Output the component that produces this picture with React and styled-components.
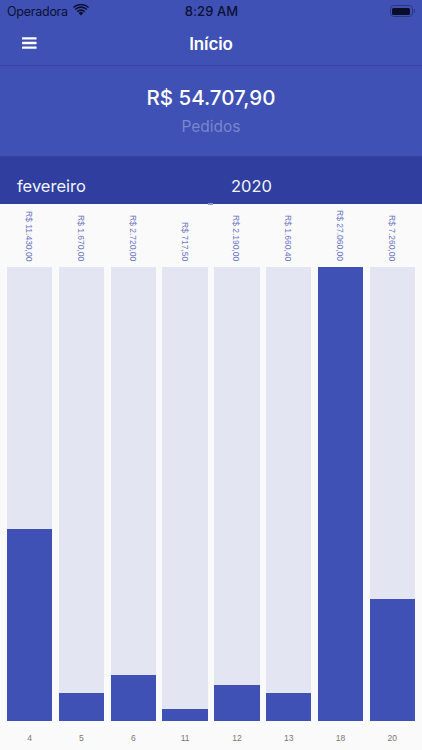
import React from "react";
import styled, { createGlobalStyle } from "styled-components";

const days = [
    { day: "4", value: "R$ 11.430,00", fill: 192 },
    { day: "5", value: "R$ 1.670,00", fill: 28 },
    { day: "6", value: "R$ 2.720,00", fill: 46 },
    { day: "11", value: "R$ 717,50", fill: 12 },
    { day: "12", value: "R$ 2.190,00", fill: 36.5 },
    { day: "13", value: "R$ 1.660,40", fill: 28 },
    { day: "18", value: "R$ 27.060,00", fill: 454 },
    { day: "20", value: "R$ 7.260,00", fill: 122 },
];

export default function App() {
    return (
        <>
            <GlobalStyle />
            <Screen>
                <Header>
                    <StatusBar>
                        <Carrier>
                            Operadora
                            <svg width="16" height="12" viewBox="0 0 16 12">
                                <path d="M8 11.6 5.6 9a3.4 3.4 0 0 1 4.8 0L8 11.6Z" fill="#0c1033" />
                                <path d="M3.7 7.1a6.1 6.1 0 0 1 8.6 0l-1.1 1.1a4.6 4.6 0 0 0-6.4 0L3.7 7.1Z" fill="#0c1033" />
                                <path d="M1.6 5a9.1 9.1 0 0 1 12.8 0l-1.1 1.1a7.6 7.6 0 0 0-10.6 0L1.6 5Z" fill="#0c1033" />
                                <path d="M0 3.1a11.4 11.4 0 0 1 16 0l-.9 1A10.1 10.1 0 0 0 .9 4.1L0 3.1Z" fill="#0c1033" />
                            </svg>
                        </Carrier>
                        <Clock>8:29 AM</Clock>
                        <BatterySlot>
                            <Battery>
                                <BatteryLevel />
                            </Battery>
                            <BatteryCap />
                        </BatterySlot>
                    </StatusBar>
                    <NavBar>
                        <MenuButton>
                            <svg width="15" height="12" viewBox="0 0 15 12">
                                <rect x="0" y="0.2" width="14.6" height="2.4" rx="0.6" fill="#fff" />
                                <rect x="0" y="4.8" width="14.6" height="2.4" rx="0.6" fill="#fff" />
                                <rect x="0" y="9.4" width="14.6" height="2.4" rx="0.6" fill="#fff" />
                            </svg>
                        </MenuButton>
                        <NavTitle>Início</NavTitle>
                    </NavBar>
                </Header>
                <Summary>
                    <Total>R$ 54.707,90</Total>
                    <TotalLabel>Pedidos</TotalLabel>
                </Summary>
                <Picker>
                    <PickerValue>fevereiro</PickerValue>
                    <PickerValue>2020</PickerValue>
                    <PickerMark />
                </Picker>
                <Chart>
                    {days.map((item) => (
                        <Column key={item.day}>
                            <ValueSlot>
                                <Value>{item.value}</Value>
                            </ValueSlot>
                            <Track>
                                <Fill style={{ height: item.fill }} />
                            </Track>
                            <DayLabel>{item.day}</DayLabel>
                        </Column>
                    ))}
                </Chart>
            </Screen>
        </>
    );
}

const GlobalStyle = createGlobalStyle`
    html, body {
        margin: 0;
        padding: 0;
        background: #fafafa;
    }
    * {
        box-sizing: border-box;
    }
`;
const Screen = styled.div`
    width: 422px;
    height: 750px;
    overflow: hidden;
    display: flex;
    flex-direction: column;
    background: #fafafa;
    font-family: Inter, "Liberation Sans", sans-serif;
`;
const Header = styled.header`
    height: 66px;
    background: #3f51b5;
    border-bottom: 1px solid #3747a3;
`;
const StatusBar = styled.div`
    height: 22px;
    padding: 0 7px;
    display: grid;
    grid-template-columns: 1fr auto 1fr;
    align-items: center;
    color: #0c1033;
`;
const Carrier = styled.div`
    display: flex;
    align-items: center;
    gap: 5px;
    font-size: 12.5px;
    letter-spacing: -0.25px;
    svg {
        margin-top: -2px;
    }
`;
const Clock = styled.div`
    margin-left: 1px;
    font-size: 13px;
    font-weight: 500;
    letter-spacing: 0.1px;
`;
const BatterySlot = styled.div`
    justify-self: end;
    display: flex;
    align-items: center;
    gap: 1px;
`;
const Battery = styled.div`
    width: 23px;
    height: 12px;
    padding: 1.5px;
    border: 1px solid #2a3780;
    border-radius: 3.5px;
`;
const BatteryLevel = styled.div`
    width: 100%;
    height: 100%;
    background: #0a0d2a;
    border-radius: 1.5px;
`;
const BatteryCap = styled.div`
    width: 1.5px;
    height: 4px;
    background: #2a3780;
    border-radius: 0 1px 1px 0;
`;
const NavBar = styled.div`
    position: relative;
    height: 43px;
    display: flex;
    align-items: center;
    justify-content: center;
`;
const MenuButton = styled.div`
    position: absolute;
    left: 22px;
    top: 15px;
    display: flex;
`;
const NavTitle = styled.div`
    color: #fff;
    font-size: 17px;
    font-weight: 600;
    letter-spacing: -0.1px;
`;
const Summary = styled.section`
    height: 90px;
    padding-top: 18px;
    background: #3f51b5;
    display: flex;
    flex-direction: column;
    align-items: center;
`;
const Total = styled.div`
    color: #fff;
    font-size: 20.5px;
    font-weight: 500;
    line-height: 28px;
`;
const TotalLabel = styled.div`
    margin-top: 4px;
    color: #7986cb;
    font-size: 15.5px;
    line-height: 22px;
`;
const Picker = styled.section`
    position: relative;
    height: 48px;
    padding-top: 19px;
    display: grid;
    grid-template-columns: 214px 1fr;
    background: #303f9f;
    box-shadow: inset 0 3px 3px -2px #35459f;
`;
const PickerValue = styled.div`
    padding-left: 17px;
    color: #f1f3fb;
    font-size: 16.5px;
    line-height: 22px;
`;
const PickerMark = styled.div`
    position: absolute;
    left: 208px;
    bottom: -1px;
    width: 5px;
    height: 2px;
    background: #8d97cf;
`;
const Chart = styled.section`
    flex: 1;
    padding: 0 7px;
    display: grid;
    grid-template-columns: repeat(8, 1fr);
    column-gap: 6.5px;
`;
const Column = styled.div`
    display: flex;
    flex-direction: column;
    min-width: 0;
`;
const ValueSlot = styled.div`
    height: 63px;
    padding: 6px 0 6px;
    display: flex;
    align-items: flex-end;
    justify-content: center;
`;
const Value = styled.span`
    margin-right: 1px;
    writing-mode: vertical-rl;
    color: #6a78c4;
    font-family: "Liberation Sans", Arial, sans-serif;
    font-size: 8.5px;
    line-height: 10px;
    white-space: nowrap;
`;
const Track = styled.div`
    height: 454px;
    display: flex;
    align-items: flex-end;
    background: #e3e5f2;
`;
const Fill = styled.div`
    width: 100%;
    background: #3f51b5;
`;
const DayLabel = styled.div`
    margin-top: 12px;
    text-align: center;
    color: #777;
    font-family: "Liberation Sans", Arial, sans-serif;
    font-size: 8.5px;
    line-height: 10px;
`;
